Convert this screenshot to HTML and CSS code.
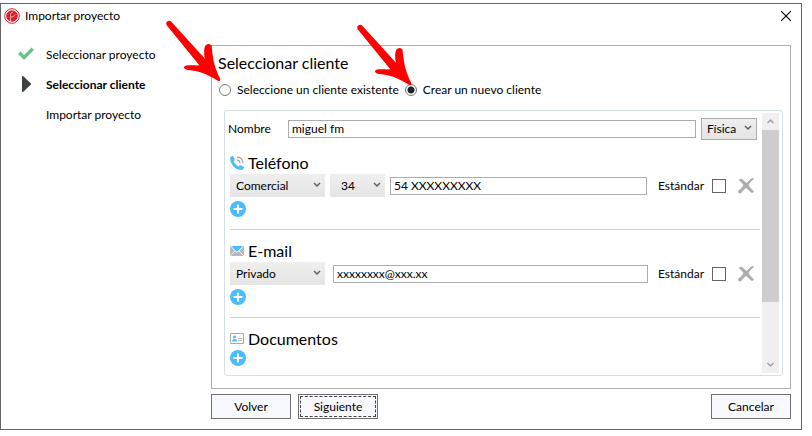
FILE: index.html
```
<!DOCTYPE html>
<html lang="es">

    <head>
        <meta charset="UTF-8">
        <title>Importar proyecto</title>
        <link rel="stylesheet" href="styles.css">
    </head>

    <body>
        <!-- shared shapes -->
        <svg class="symbols" aria-hidden="true">
            <symbol id="arrow" viewBox="42 54 180 198">
                <path fill="#f00" d="M64 65 L165 176 C162 162 161 146 166 137 Q174 127 184 136 C189 165 187 190 211 238 Q211 245 205 243 C182 229 160 214 110 209 Q96 203 106 197 C120 194 135 197 148 196 L50 76 Q46 66 54 63 Q60 61 64 65Z"/>
            </symbol>
            <symbol id="plus" viewBox="0 0 16 16">
                <circle cx="8" cy="8" r="8" fill="#4cbcff"/>
                <path d="M8 3.500v9M3.500 8h9" stroke="#fff" stroke-width="2"/>
            </symbol>
            <symbol id="remove" viewBox="0 0 16 16">
                <path fill="#aeaeae" d="M1 2 Q2 0 4 1 L8.500 5 Q11 2 14 0 Q16.500 0 15.500 1.500 Q12 4 10.500 7 Q12.500 10.500 16 13.500 Q15 15.500 13 14.500 L8 10 Q5 12 3.500 15 Q0 16.500 0 13 Q4 10 5.500 7Z"/>
            </symbol>
        </svg>

        <main class="window">
            <header class="title-bar">
                <svg class="logo" viewBox="0 0 16 16">
                    <circle cx="8" cy="8" r="7.300" fill="#fff" stroke="#d8232a" stroke-width="1"/>
                    <circle cx="8" cy="8" r="5.800" fill="#d8232a"/>
                    <path d="M6.500 14V6.500q0-2 2.500-2.500M7 9q3 .5 4-2.500" fill="none" stroke="#f6c4c6" stroke-width=".8"/>
                </svg>
                <h1>Importar proyecto</h1>
                <button class="close" aria-label="Cerrar">
                    <svg viewBox="0 0 10 10"><path d="M0 0l10 10M10 0L0 10" stroke="#000" stroke-width="1.100"/></svg>
                </button>
            </header>

            <div class="content">
                <ol class="steps">
                    <li>
                        <svg viewBox="0 0 16 16"><path fill="#6cc08b" d="M0 8L2.500 5.500 6 9 13.500 1.500 16 4 6 14Z"/></svg>
                        Seleccionar proyecto
                    </li>
                    <li class="current">
                        <svg viewBox="0 0 16 16"><path fill="#3c4043" d="M4 0h1l8 7.500v1L5 16H4Z"/></svg>
                        Seleccionar cliente
                    </li>
                    <li>Importar proyecto</li>
                </ol>

                <section class="panel">
                    <h2>Seleccionar cliente</h2>
                    <div class="modes">
                        <label class="mode">
                            <input type="radio" name="mode">
                            Seleccione un cliente existente
                            <svg class="pointer"><use href="#arrow"/></svg>
                        </label>
                        <label class="mode">
                            <input type="radio" name="mode" checked>
                            Crear un nuevo cliente
                            <svg class="pointer pointer-new"><use href="#arrow"/></svg>
                        </label>
                    </div>

                    <form class="client">
                        <div class="fields">
                            <div class="name-row">
                                <label for="name">Nombre</label>
                                <input type="text" id="name" value="miguel fm">
                                <select class="person" aria-label="Tipo de persona"><option>Física</option></select>
                            </div>

                            <section class="group">
                                <h3>
                                    <svg viewBox="0 0 14 14">
                                        <path fill="#4cbcff" d="M0 2Q1 0 3 0L5 4 3.500 5.500Q5 8.500 8.500 10.500L10 9 14 11Q13.500 14 11 14 6 13.500 3 10 0 6.500 0 2Z"/>
                                        <path d="M7 1q5.500.5 6 6M7 4q3 .5 3 3" fill="none" stroke="#aaa" stroke-width="1.300"/>
                                    </svg>
                                    Teléfono
                                </h3>
                                <div class="row">
                                    <select class="kind" aria-label="Tipo de teléfono"><option>Comercial</option></select>
                                    <select class="prefix" aria-label="Prefijo"><option>34</option></select>
                                    <input type="text" value="54 XXXXXXXXX" aria-label="Teléfono">
                                    <label class="standard">Estándar <input type="checkbox"></label>
                                    <button type="button" class="icon-button" aria-label="Eliminar"><svg><use href="#remove"/></svg></button>
                                </div>
                                <button type="button" class="icon-button" aria-label="Añadir teléfono"><svg><use href="#plus"/></svg></button>
                            </section>

                            <section class="group">
                                <h3>
                                    <svg viewBox="0 0 14 14">
                                        <path fill="#b8b8b8" d="M0 2h14v10H0Z"/>
                                        <path fill="#4cbcff" stroke="#fff" d="M0 1.500h14L7 8.500Z"/>
                                        <path d="M0 12l5-5M14 12L9 7" stroke="#fff" stroke-width=".8"/>
                                    </svg>
                                    E-mail
                                </h3>
                                <div class="row row-email">
                                    <select class="kind" aria-label="Tipo de e-mail"><option>Privado</option></select>
                                    <input type="text" value="xxxxxxxx@xxx.xx" aria-label="E-mail">
                                    <label class="standard">Estándar <input type="checkbox"></label>
                                    <button type="button" class="icon-button" aria-label="Eliminar"><svg><use href="#remove"/></svg></button>
                                </div>
                                <button type="button" class="icon-button" aria-label="Añadir e-mail"><svg><use href="#plus"/></svg></button>
                            </section>

                            <section class="group">
                                <h3>
                                    <svg viewBox="0 0 14 14">
                                        <path d="M.5 1.500h13v10H.5Z" fill="#fff" stroke="#aaa"/>
                                        <circle cx="4.500" cy="5" r="1.500" fill="#4cbcff"/>
                                        <path d="M2 9.500q0-2.500 2.500-2.500t2.500 2.500Z" fill="#4cbcff"/>
                                        <path d="M8 6.500h4M8 8.500h4" stroke="#aaa" stroke-width=".8"/>
                                    </svg>
                                    Documentos
                                </h3>
                                <button type="button" class="icon-button" aria-label="Añadir documento"><svg><use href="#plus"/></svg></button>
                            </section>
                        </div>

                        <div class="scrollbar" aria-hidden="true">
                            <svg viewBox="0 0 17 17"><path d="M5.500 10l3-3 3 3" fill="none" stroke="#a0a0a0" stroke-width="1.500"/></svg>
                            <div class="track"><div class="thumb"></div></div>
                            <svg viewBox="0 0 17 17"><path d="M5.500 7l3 3 3-3" fill="none" stroke="#a0a0a0" stroke-width="1.500"/></svg>
                        </div>
                    </form>
                </section>
            </div>

            <footer class="actions">
                <button>Volver</button>
                <button class="focused">Siguiente</button>
                <button class="cancel">Cancelar</button>
            </footer>
        </main>
    </body>

</html>
```

FILE: styles.css
```
* {
    padding: 0;
    margin: 0;
    box-sizing: border-box;
}

body {
    padding: 3px 10px 6px 0;
    background-color: #fff;
}

body,
button,
input,
select {
    font: 12px/16px Lato, "Open Sans", sans-serif;
    color: #000;
}

svg {
    display: block;
    flex: none;
}

.symbols {
    position: absolute;
    width: 0;
    height: 0;
}

.window {
    border: 1px solid #666;
    padding-bottom: 10px;
}

.title-bar {
    display: flex;
    align-items: center;
    height: 24px;
    padding: 0 10px 0 3px;
}

.logo {
    width: 16px;
    height: 16px;
    margin-right: 5px;
}

h1 {
    font-size: 12px;
    font-weight: normal;
}

.close {
    margin-left: auto;
    border: none;
    background: none;
}

.close svg {
    width: 10px;
    height: 10px;
}

.content {
    display: flex;
    padding: 0 10px 0 0;
}

/* wizard steps */

.steps {
    flex: none;
    width: 210px;
    padding: 13px 0 0 17px;
    list-style: none;
}

.steps li {
    position: relative;
    height: 30px;
    padding: 6px 0 0 28px;
}

.steps svg {
    position: absolute;
    left: 0;
    top: 5px;
    width: 16px;
    height: 16px;
}

.steps .current {
    font-weight: bold;
}

/* client panel */

.panel {
    flex: 1;
    min-width: 0;
    margin-top: 17px;
    padding: 5px 7px 12px 12px;
    border: 1px solid #adadad;
}

h2 {
    margin-left: -6px;
    font-size: 16px;
    line-height: 24px;
    font-weight: normal;
}

.modes {
    display: flex;
    gap: 6px;
    margin: 7px 0 12px -5px;
}

.mode {
    position: relative;
    display: flex;
    align-items: center;
    gap: 6px;
}

.mode input {
    appearance: none;
    width: 12px;
    height: 12px;
    border: 1px solid #777;
    border-radius: 50%;
    background: #fff;
}

.mode input:checked {
    background: radial-gradient(#222 3px, #fff 4px);
}

.pointer {
    position: absolute;
    left: -55px;
    bottom: 14px;
    width: 60px;
    height: 66px;
}

.pointer-new {
    left: -50px;
    bottom: 10px;
}

.client {
    display: flex;
    gap: 2px;
    padding: 2px 3px 2px 5px;
    border: 1px solid #d5dfe5;
    border-radius: 3px;
}

.fields {
    flex: 1;
    min-width: 0;
}

input[type="text"] {
    flex: 1;
    min-width: 0;
    height: 18px;
    padding: 0 3px;
    border: 1px solid #abadb3;
    background: #fff;
}

select {
    appearance: none;
    flex: none;
    height: 23px;
    padding: 0 6px;
    border: none;
    border-radius: 0;
    background: url("data:image/svg+xml,%3Csvg xmlns='http://www.w3.org/2000/svg' width='8' height='6'%3E%3Cpath d='M1 1l3 3 3-3' fill='none' stroke='%23606060' stroke-width='1.500'/%3E%3C/svg%3E") no-repeat right 4px top 8px, linear-gradient(#efefef, #e4e4e4);
}

.name-row {
    display: flex;
    align-items: center;
    gap: 5px;
    height: 29px;
    padding: 2px 3px 0 0;
}

.name-row label {
    width: 55px;
    margin-left: -2px;
}

.person {
    width: 56px;
    height: 22px;
    padding: 0 5px;
    border: 1px solid #adadad;
    background-position: right 4px top 6px, 0 0;
}

.group {
    padding: 9px 0 12px;
    border-bottom: 1px solid #d0d0d0;
}

.group:last-child {
    padding-bottom: 0;
    border-bottom: none;
}

h3 {
    display: flex;
    align-items: center;
    gap: 4px;
    font-size: 16px;
    line-height: 23px;
    font-weight: normal;
}

h3 svg {
    width: 14px;
    height: 14px;
}

.row {
    display: flex;
    align-items: center;
    gap: 5px;
    margin-bottom: 4px;
    padding-right: 6px;
}

.row-email {
    gap: 8px;
}

.kind {
    width: 95px;
}

.prefix {
    width: 55px;
    padding: 0 11px;
}

.standard {
    display: flex;
    align-items: center;
    justify-content: space-between;
    width: 68px;
    margin: 0 7px 0 6px;
}

.row-email .standard {
    margin: 0 4px 0 2px;
}

.standard input {
    appearance: none;
    width: 14px;
    height: 14px;
    border: 1px solid #666;
    background: #fff;
}

.icon-button {
    display: block;
    border: none;
    background: none;
}

.icon-button svg {
    width: 16px;
    height: 16px;
}

.scrollbar {
    display: flex;
    flex-direction: column;
    width: 17px;
    height: 260px;
    background-color: #f0f0f0;
}

.scrollbar svg {
    width: 17px;
    height: 17px;
}

.track {
    flex: 1;
}

.thumb {
    height: 76%;
    background-color: #cdcdcd;
}

/* bottom buttons */

.actions {
    display: flex;
    gap: 7px;
    padding: 5px 10px 0 210px;
}

.actions button {
    width: 80px;
    height: 25px;
    border: 1px solid #707070;
    background-color: #f8f8ff;
}

.actions .focused {
    outline: 1px dashed #444;
    outline-offset: -3px;
}

.actions .cancel {
    margin-left: auto;
}
```
